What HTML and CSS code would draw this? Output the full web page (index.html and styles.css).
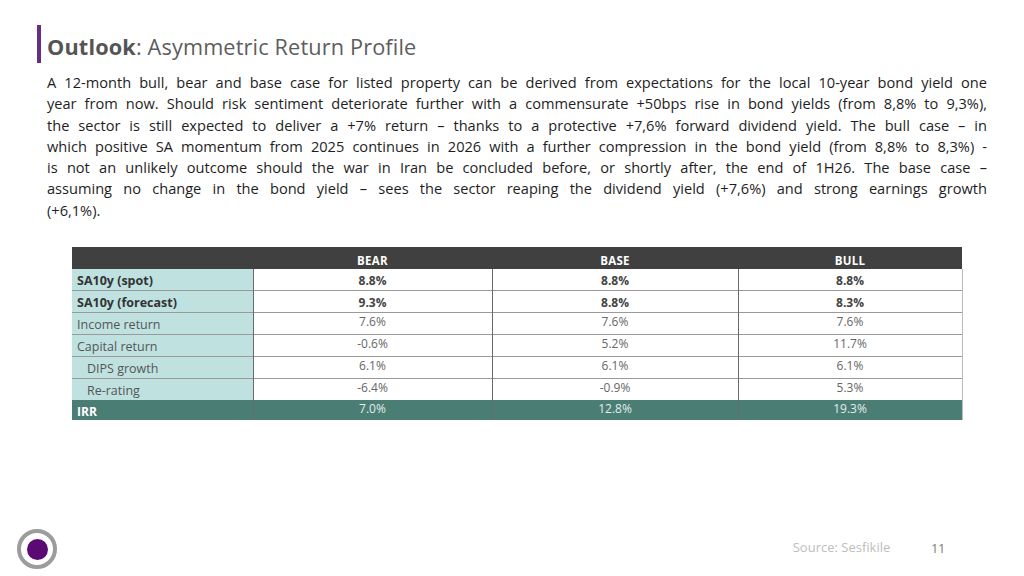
FILE: index.html
```html
<!DOCTYPE html>
<html>
<head>
<meta charset="utf-8">
<link rel="stylesheet" href="styles.css">
</head>
<body>
<div class="slide">
  <div class="title-row">
    <h1 class="title"><span class="title-strong">Outlook</span>: Asymmetric Return Profile</h1>
  </div>
  <p class="para">
    <span class="line">A 12-month bull, bear and base case for listed property can be derived from expectations for the local 10-year bond yield one</span>
    <span class="line">year from now. Should risk sentiment deteriorate further with a commensurate +50bps rise in bond yields (from 8,8% to 9,3%),</span>
    <span class="line">the sector is still expected to deliver a +7% return – thanks to a protective +7,6% forward dividend yield. The bull case – in</span>
    <span class="line">which positive SA momentum from 2025 continues in 2026 with a further compression in the bond yield (from 8,8% to 8,3%) -</span>
    <span class="line">is not an unlikely outcome should the war in Iran be concluded before, or shortly after, the end of 1H26. The base case –</span>
    <span class="line">assuming no change in the bond yield – sees the sector reaping the dividend yield (+7,6%) and strong earnings growth</span>
    <span class="line last">(+6,1%).</span>
  </p>
  <table class="grid">
    <colgroup>
      <col class="c-label"><col class="c-bear"><col class="c-base"><col class="c-bull">
    </colgroup>
    <thead>
      <tr class="head"><th></th><th>BEAR</th><th>BASE</th><th>BULL</th></tr>
    </thead>
    <tbody>
      <tr class="strong"><td class="lbl">SA10y (spot)</td><td>8.8%</td><td>8.8%</td><td>8.8%</td></tr>
      <tr class="strong"><td class="lbl">SA10y (forecast)</td><td>9.3%</td><td>8.8%</td><td>8.3%</td></tr>
      <tr><td class="lbl">Income return</td><td>7.6%</td><td>7.6%</td><td>7.6%</td></tr>
      <tr><td class="lbl">Capital return</td><td>-0.6%</td><td>5.2%</td><td>11.7%</td></tr>
      <tr><td class="lbl sub">DIPS growth</td><td>6.1%</td><td>6.1%</td><td>6.1%</td></tr>
      <tr><td class="lbl sub">Re-rating</td><td>-6.4%</td><td>-0.9%</td><td>5.3%</td></tr>
      <tr class="irr"><td class="lbl">IRR</td><td>7.0%</td><td>12.8%</td><td>19.3%</td></tr>
    </tbody>
  </table>
  <div class="footer">
    <div class="logo"><div class="logo-dot"></div></div>
    <div class="source">Source: Sesfikile</div>
    <div class="page">11</div>
  </div>
</div>
</body>
</html>
```
FILE: styles.css
```css
html, body {
  margin: 0;
  padding: 0;
  background: #ffffff;
}
.slide {
  width: 1024px;
  height: 576px;
  overflow: hidden;
  display: flex;
  flex-direction: column;
  font-family: "Open Sans", "DejaVu Sans", sans-serif;
  color: #222222;
}
.title-row {
  margin: 25px 0 0 37px;
  border-left: 4px solid #6a2c7c;
  height: 38px;
  display: flex;
  align-items: flex-end;
}
.title {
  margin: 0 0 4px 6px;
  font-size: 21.7px;
  font-weight: 400;
  line-height: 24px;
  color: #5d5d5d;
  letter-spacing: 0.15px;
}
.title-strong {
  font-weight: 700;
  color: #555555;
}
.para {
  margin: 9px 37px 0 47px;
  font-size: 14.6px;
  line-height: 21.3px;
  color: #1e1e1e;
}
.line {
  display: block;
  text-align: justify;
  text-align-last: justify;
  white-space: nowrap;
}
.line.last {
  text-align-last: left;
}
.grid {
  margin: 26px 0 0 72px;
  width: 890px;
  border-collapse: collapse;
  table-layout: fixed;
  font-size: 12px;
}
.c-label { width: 181px; }
.c-bear { width: 239px; }
.c-base { width: 246px; }
.c-bull { width: 224px; }
.head th {
  background: #404040;
  color: #ffffff;
  font-weight: 700;
  height: 21px;
  padding: 0;
  font-size: 11.5px;
  line-height: 14px;
  vertical-align: bottom;
  padding-bottom: 1px;
  letter-spacing: 0.3px;
}
.grid td {
  height: 21px;
  padding: 0;
  text-align: center;
  vertical-align: top;
  color: #666666;
  border-top: 1px solid #9a9a9a;
  border-left: 1px solid #6a6a6a;
  line-height: 18px;
}
.grid td:last-child {
  border-right: 1px solid #bcbcbc;
}
.grid tbody tr:first-child td {
  border-top: none;
}
.grid td.lbl {
  background: #bfe2e1;
  text-align: left;
  padding: 0 0 0 5px;
  vertical-align: bottom;
  border-left: none;
  font-size: 12.5px;
  color: #555555;
  line-height: 18px;
}
.grid td.lbl.sub {
  padding-left: 15px;
}
.strong td {
  font-weight: 700;
  color: #444444;
  vertical-align: bottom;
}
.strong td.lbl {
  color: #333333;
  font-weight: 700;
}
.irr td {
  background: #4a7d73;
  color: #e2efec;
  border-top: none;
  height: 20px;
}
.irr td.lbl {
  background: #4a7d73;
  color: #ffffff;
  font-weight: 700;
  font-size: 12px;
  line-height: 16px;
}
.footer {
  margin-top: auto;
  height: 58px;
  display: flex;
  align-items: center;
}
.logo {
  margin: 0 0 0 17px;
  width: 32px;
  height: 32px;
  border: 4px solid #9c9c9c;
  border-radius: 50%;
  display: flex;
  align-items: center;
  justify-content: center;
  position: relative;
  top: 2px;
}
.logo-dot {
  width: 21px;
  height: 21px;
  border-radius: 50%;
  background: #5b0a74;
}
.source {
  margin-left: auto;
  font-size: 13px;
  color: #bdbdbd;
}
.page {
  margin: 3px 79px 0 41px;
  font-size: 12px;
  color: #777777;
}
```
